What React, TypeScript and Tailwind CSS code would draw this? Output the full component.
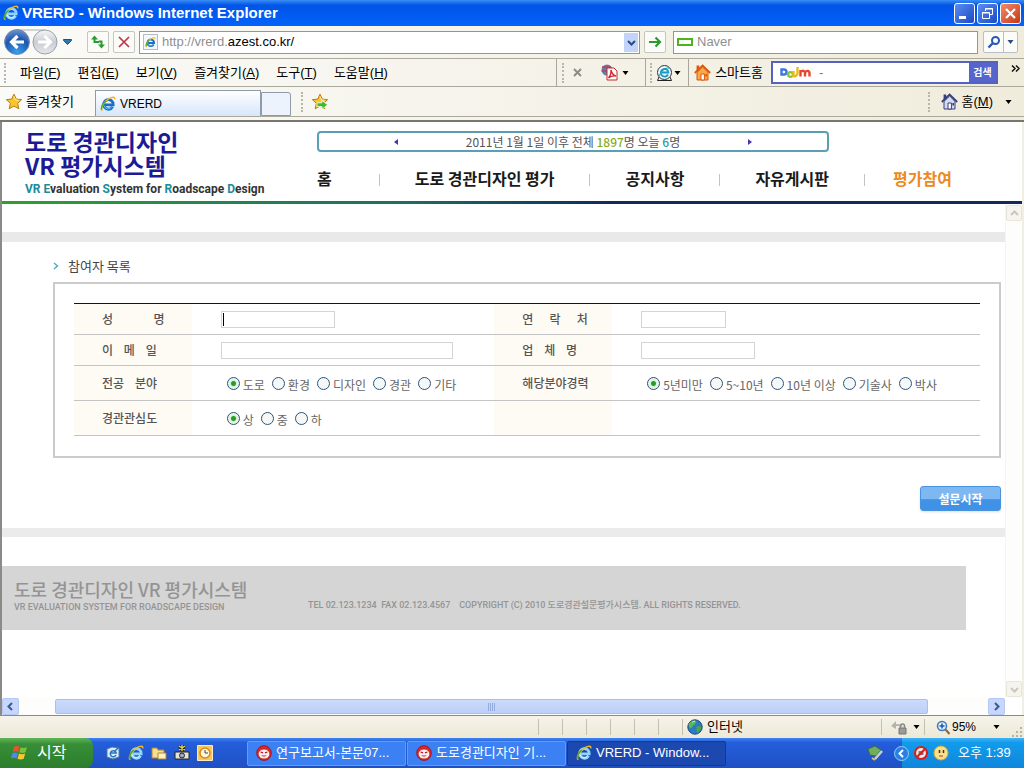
import React from 'react';
import clsx from 'clsx';

function IeIcon({ size = 16, light = false }: { size?: number; light?: boolean }) {
  return (
    <svg width={size} height={size} viewBox="0 0 16 16" fill="none" className="shrink-0">
      <path d="M12.6 10.8A4.8 4.8 0 1 1 13.2 8.8H4.6" stroke={light ? '#8fd4fb' : '#1c6fc4'} strokeWidth="2.8" />
      <path d="M11.8 10.8A4.2 4.2 0 0 1 4 9.4" stroke={light ? '#e4f6ff' : '#5cc0f4'} strokeWidth="1" />
      <path d="M2.4 14.6C-.6 13.6 3.6 5.6 9 2.6 12.4.6 15 .6 14.8 3.4" stroke="#f0b81c" strokeWidth="1.5" />
      <path d="M1.8 13.6C.8 10.8 3 7.6 5.6 5" stroke="#4faa32" strokeWidth="1.6" />
    </svg>
  );
}

function StarIcon({ add = false }: { add?: boolean }) {
  return (
    <svg width="18" height="18" viewBox="0 0 18 18" className="shrink-0">
      <path d="M9 1.2l2.3 4.9 5.3.6-4 3.6 1.2 5.5L9 13l-4.8 2.8 1.2-5.5-4-3.6 5.3-.6z" fill="#fbc52c" stroke="#b97a10" />
      <path d="M9 3.4l1.4 3.5 3.4.4" stroke="#fff2a6" fill="none" />
      {add && <path d="M6 9.8h5V7.4l5.6 4.4-5.6 4.4v-2.6H6z" fill="#3dbb2c" stroke="#fff" strokeWidth=".8" />}
    </svg>
  );
}

function HouseIcon({ roof, wall }: { roof: string; wall: string }) {
  return (
    <svg width="17" height="17" viewBox="0 0 17 17" className="shrink-0">
      <path d="M3 8.4L8.6 3 14 8.4V16H3z" fill={wall} stroke={roof} />
      <path d="M2.6 1.4h2.6V6L2.6 8z" fill={roof} />
      <path d="M.8 9L8.6 1.6 16.2 9" fill="none" stroke={roof} strokeWidth="1.8" />
      <path d="M7 10h3.4v6H7z" fill="#fff" stroke={roof} />
      <path d="M11.4 10h1.6v2.4h-1.6z" fill={roof} />
    </svg>
  );
}

function GlobeIcon() {
  return (
    <svg width="16" height="16" viewBox="0 0 16 16" className="shrink-0">
      <circle cx="8" cy="8" r="7.2" fill="#2b79c4" stroke="#1c4a78" />
      <path d="M2 4.6C4.4 1 8.6 1 9.4 2.4 8 4 8.6 5.6 6.6 6.2 4.8 6.8 5.4 9 3.4 9.4 2 8 1.4 6.4 2 4.6z" fill="#5cb84c" />
      <path d="M9 8c2-1.6 4-.8 5.4 0-.2 3-2 5-4 5.8C9 12.4 10 10.4 9 8z" fill="#49a447" />
      <path d="M5 3.4c1-1 2.4-1.2 3-1" stroke="#cfeaff" fill="none" />
    </svg>
  );
}

function HwpIcon() {
  return (
    <svg width="16" height="16" viewBox="0 0 16 16" className="shrink-0">
      <circle cx="8" cy="8" r="7.4" fill="#d8262a" stroke="#8d1b26" strokeWidth=".8" />
      <ellipse cx="8" cy="9" rx="5.4" ry="4.6" fill="#fbeeee" />
      <path d="M4.6 7l2.4.8M11.4 7L9 7.8" stroke="#b5161c" strokeWidth="1.3" fill="none" />
      <path d="M5.5 10c1.6.8 3.4.8 5 0-.4 2-4.6 2-5 0z" fill="#d8262a" />
    </svg>
  );
}

function Caret({ className = 'text-black' }: { className?: string }) {
  return (
    <svg width="7" height="4" viewBox="0 0 7 4" className={clsx('shrink-0', className)}>
      <path d="M.5 0h6L3.5 4z" fill="currentColor" />
    </svg>
  );
}

function Chevron({ d }: { d: string }) {
  return (
    <svg width="9" height="9" viewBox="0 0 9 9" fill="none">
      <path d={d} stroke="currentColor" strokeWidth="2" />
    </svg>
  );
}

function Grip() {
  return <span className="block h-5 w-0 shrink-0 border-l-2 border-dotted border-[#b9b7a8]" />;
}

function Divider() {
  return <span className="block h-7 w-px shrink-0 bg-[#a9a79a]" />;
}

function TitleBar() {
  const winButton = 'flex size-[21px] items-center justify-center rounded-[3px] border border-white';
  return (
    <div className="flex h-[26px] items-center bg-linear-to-b from-[#3a8cf5] via-[#0054e6] via-20% to-[#0462fb] pr-[3px] pl-[3px]">
      <IeIcon light />
      <h1 className="ml-[3px] flex-1 text-[15px] leading-5 font-bold text-white [font-family:'Liberation_Sans',sans-serif]">
        VRERD - Windows Internet Explorer
      </h1>
      <div className="flex gap-[2px]">
        <button aria-label="최소화" className={clsx(winButton, 'bg-linear-to-br from-[#5c8df2] to-[#1a49c4]')}>
          <svg width="13" height="13" viewBox="0 0 13 13"><path d="M1 9h7v3H1z" fill="#fff" /></svg>
        </button>
        <button aria-label="이전 크기로" className={clsx(winButton, 'bg-linear-to-br from-[#5c8df2] to-[#1a49c4]')}>
          <svg width="13" height="13" viewBox="0 0 13 13" fill="none" stroke="#fff">
            <path d="M4.5 4V1.5h7v6H9M4 2h8" />
            <path d="M1.5 5.5h7v6h-7zM1 6h8" />
          </svg>
        </button>
        <button aria-label="닫기" className={clsx(winButton, 'bg-linear-to-br from-[#f08a68] to-[#c8330c]')}>
          <svg width="13" height="13" viewBox="0 0 13 13"><path d="M2 2l9 9M11 2l-9 9" stroke="#fff" strokeWidth="2.2" /></svg>
        </button>
      </div>
    </div>
  );
}

function AddressBar() {
  const toolButton = 'flex size-[22px] shrink-0 items-center justify-center rounded-[2px] border border-[#c5c6bd] bg-[#fbfbf8]';
  return (
    <div className="flex h-8 items-center bg-linear-to-r from-[#fafaf8] to-[#f0ecdc] pr-[6px] pl-1">
      <svg width="56" height="28" viewBox="0 0 56 28" className="shrink-0">
        <defs>
          <radialGradient id="back" cx=".5" cy=".9" r=".9">
            <stop offset="0" stopColor="#39a0f0" />
            <stop offset=".6" stopColor="#1d55ae" />
            <stop offset="1" stopColor="#6f94cc" />
          </radialGradient>
          <linearGradient id="fwd" x2="0" y2="1">
            <stop offset="0" stopColor="#f5f6f7" />
            <stop offset=".5" stopColor="#c9cdd2" />
            <stop offset="1" stopColor="#e6e8ea" />
          </linearGradient>
        </defs>
        <path d="M13 2h28" stroke="#a9b0b8" />
        <circle cx="41" cy="14" r="12" fill="url(#fwd)" stroke="#9aa2ab" />
        <circle cx="13" cy="14" r="12.4" fill="url(#back)" stroke="#6f88ae" />
        <path d="M20 14H8m5.5-6l-6 6 6 6" fill="none" stroke="#fff" strokeWidth="3.2" />
        <path d="M34 14h12m-5.5-6l6 6-6 6" fill="none" stroke="#fff" strokeWidth="3" />
      </svg>
      <svg width="9" height="6" viewBox="0 0 9 6" className="mx-[3px] shrink-0">
        <path d="M.5.5h8v1l-4 4-4-4z" fill="#2f78b8" stroke="#1f4f86" />
      </svg>
      <button aria-label="새로 고침" className={clsx(toolButton, 'ml-3')}>
        <svg width="16" height="16" viewBox="0 0 16 16" fill="#2e9a34">
          <path d="M4.5 1.5L8 5.500H5.500V7H9v2H3.500V5.500H1z" />
          <path d="M11.5 14.500L8 10.500h2.500V8.500H8.800v-2h3.700v4H15z" />
        </svg>
      </button>
      <button aria-label="중지" className={clsx(toolButton, 'ml-1')}>
        <svg width="14" height="14" viewBox="0 0 14 14"><path d="M2 2l10 10M12 2L2 12" stroke="#c0344a" strokeWidth="1.7" /></svg>
      </button>
      <div className="ml-1 flex h-[23px] flex-1 items-center border border-[#8a97a8] bg-white pr-px pl-[3px] text-[13px] [font-family:'Liberation_Sans',sans-serif]">
        <span className="flex h-4 items-center border border-[#b8bcc2] bg-[#f4f7fa] px-px"><IeIcon size={11} /></span>
        <label htmlFor="url" className="ml-1 text-[#8f8f8f]">http://vrerd.</label>
        <input id="url" defaultValue="azest.co.kr/" className="min-w-0 flex-1 text-black outline-none" />
        <button aria-label="주소 목록" className="flex h-[19px] w-[14px] items-center justify-center bg-[#c3d4fb] text-[#2c4a86]">
          <Chevron d="M1 3l3.5 3.5L8 3" />
        </button>
      </div>
      <button aria-label="이동" className={clsx(toolButton, 'ml-1')}>
        <svg width="16" height="16" viewBox="0 0 16 16"><path d="M2 8h11M8.5 3.5L13 8l-4.5 4.5" fill="none" stroke="#2c9a2c" strokeWidth="2.2" /></svg>
      </button>
      <label className="ml-[7px] flex h-[23px] w-[305px] items-center border border-[#8a97a8] bg-white pl-[3px]">
        <span className="h-2 w-4 border-2 border-[#4cb51a]" />
        <input aria-label="검색" placeholder="Naver" className="ml-1 min-w-0 flex-1 text-[13px] outline-none placeholder:text-[#8f8f8f] [font-family:'Liberation_Sans',sans-serif]" />
      </label>
      <div className="ml-[5px] flex h-[22px] rounded-[2px] border border-[#b9bfc9] bg-[#fbfbf8]">
        <button aria-label="찾기" className="flex w-5 items-center justify-center border-r border-[#b9bfc9]">
          <svg width="14" height="14" viewBox="0 0 14 14" fill="none" stroke="#2c55b8">
            <circle cx="8.5" cy="5.5" r="3.5" strokeWidth="2" />
            <path d="M6 8l-4.5 4.5" strokeWidth="2.4" />
          </svg>
        </button>
        <button aria-label="찾기 옵션" className="flex w-[13px] items-center justify-center"><Caret className="text-[#2c4a86]" /></button>
      </div>
    </div>
  );
}

const menus = [
  ['파일', 'F'],
  ['편집', 'E'],
  ['보기', 'V'],
  ['즐겨찾기', 'A'],
  ['도구', 'T'],
  ['도움말', 'H'],
];

function MenuBar() {
  return (
    <div className="flex h-[29px] items-center border-y border-[#aaa99c] bg-linear-to-r from-[#fafaf8] to-[#f0ecdc] text-[13px] leading-5">
      <span className="ml-1"><Grip /></span>
      <nav className="ml-[14px] flex flex-1 gap-[17px]">
        {menus.map(([name, key]) => (
          <button key={key}>{name}(<u>{key}</u>)</button>
        ))}
      </nav>
      <Divider />
      <span className="ml-[5px]"><Grip /></span>
      <button aria-label="도구 모음 닫기" className="ml-[9px]">
        <svg width="9" height="9" viewBox="0 0 9 9"><path d="M1 1l7 7M8 1L1 8" stroke="#8d8c86" strokeWidth="2" /></svg>
      </button>
      <svg width="18" height="17" viewBox="0 0 18 17" className="mr-1 ml-[18px] shrink-0">
        <circle cx="7" cy="6" r="5.5" fill="#5d7fae" />
        <path d="M2 3h9M1.5 7h10" stroke="#b9425c" strokeWidth="1.5" />
        <path d="M7 4h7l3 3v9H7z" fill="#fff" stroke="#c22b30" />
        <path d="M8.5 14c2-2.5 3-5 2.5-8 1 4 2.5 5.5 5 6-3-.5-5 0-7.5 2z" fill="none" stroke="#d8262a" strokeWidth="1.3" />
      </svg>
      <Caret />
      <span className="ml-4"><Divider /></span>
      <span className="ml-1"><Grip /></span>
      <svg width="18" height="18" viewBox="0 0 18 18" fill="none" className="ml-1 shrink-0">
        <path d="M3 13L1.5 16.5h14L14 13" fill="#e9eef2" stroke="#222" />
        <circle cx="8.5" cy="8.5" r="7" fill="#eaf8fc" stroke="#333" />
        <path d="M12 10.5a3.8 3.8 0 1 1 .4-2H6" stroke="#159ac2" strokeWidth="1.8" />
        <path d="M3.5 12C4 8 9 3.5 13.5 4" stroke="#159ac2" />
      </svg>
      <Caret />
      <span className="ml-[7px]"><Divider /></span>
      <a href="#home" className="ml-[5px] flex items-center gap-1">
        <HouseIcon roof="#d8590c" wall="#f9a84a" />
        스마트홈
      </a>
      <form className="ml-2 flex h-[23px] w-[227px] items-center border-2 border-[#5462c4] bg-white pl-[7px]">
        <svg width="31" height="13" viewBox="0 0 31 13" fill="none" strokeWidth="2.4" className="shrink-0">
          <path d="M1.5 3.5H4a2.5 2.5 0 0 1 0 5H1.5z" stroke="#3f78e0" />
          <circle cx="10.5" cy="8.5" r="2.4" stroke="#8cc431" />
          <path d="M13.5 5v6M17.5 1v6a3 3 0 0 1-4 3" stroke="#f0b81c" />
          <path d="M20.5 10.5V4M20.5 6c2-2 4.5-1.5 4.5 1v3.5M25 6.5c2-2.5 4.5-2 4.5 1v3" stroke="#e4482f" />
        </svg>
        <span className="ml-2 text-[#777]">-</span>
        <input aria-label="다음 검색" className="min-w-0 flex-1 outline-none" />
        <button className="h-full w-[27px] bg-[#5664cc] text-[10px] font-bold text-white">검색</button>
      </form>
      <svg width="9" height="7" viewBox="0 0 9 7" fill="none" className="mt-[6px] mr-1 ml-[13px] shrink-0 self-start">
        <path d="M1 .5l3 3-3 3M5 .5l3 3-3 3" stroke="#111" strokeWidth="1.5" />
      </svg>
    </div>
  );
}

function TabBar() {
  return (
    <div className="flex h-[35px] items-start border-b-2 border-[#77766f] bg-linear-to-r from-[#fafaf8] to-[#f0ecdc] text-[13px] leading-5">
      <div className="flex h-[30px] w-full items-center border-b border-[#aaa99c]">
        <button className="flex w-[95px] items-center gap-[3px] pl-[5px]">
          <StarIcon />
          즐겨찾기
        </button>
        <button className="flex h-[26px] w-[166px] items-center gap-1 self-end border border-b-0 border-[#8f9aab] bg-linear-to-b from-white to-[#d6e6fa] pl-1 text-xs [font-family:'Liberation_Sans',sans-serif]">
          <IeIcon />
          VRERD
        </button>
        <button aria-label="새 탭" className="h-6 w-[30px] self-end rounded-tr-[3px] border border-[#8f9aab] bg-[#edf3fc]" />
        <span className="ml-[10px]"><Grip /></span>
        <button aria-label="즐겨찾기에 추가" className="ml-2"><StarIcon add /></button>
        <span className="ml-auto"><Grip /></span>
        <button className="mr-3 ml-[11px] flex items-center gap-1">
          <HouseIcon roof="#3a3f7a" wall="#d3dcf0" />
          <span>홈(<u>M</u>)</span>
        </button>
        <Caret />
        <span className="w-3" />
      </div>
    </div>
  );
}

const navItems = ['도로 경관디자인 평가', '공지사항', '자유게시판'];

function SiteHeader() {
  return (
    <header>
      <div className="grid h-[79px] grid-cols-[315px_1fr]">
        <div className="pt-[7px] pl-[23px]">
          <p className="text-[23px] leading-6 font-bold text-[#1b1b96]">도로 경관디자인</p>
          <p className="text-[23px] leading-6 font-bold text-[#1b1b96]">VR 평가시스템</p>
          <p className="pt-1 text-xs leading-4 font-bold whitespace-nowrap text-[#333] [font-family:'Roboto',sans-serif]">
            <span className="text-[#1b8c98]">VR E</span>valuation <span className="text-[#1b8c98]">S</span>ystem for{' '}
            <span className="text-[#1b8c98]">R</span>oadscape <span className="text-[#1b8c98]">D</span>esign
          </p>
        </div>
        <div className="pt-[9px]">
          <div className="flex h-[21px] w-[512px] items-center justify-between rounded-[4px] border-2 border-[#5a9fb4] px-[75px] text-[12px] text-[#555]">
            <button aria-label="이전" className="text-[#4337b0]">
              <svg width="4" height="6" viewBox="0 0 4 6"><path d="M4 0v6L0 3z" fill="currentColor" /></svg>
            </button>
            <p className="leading-4">
              2011년 1월 1일 이후 전체 <b className="font-medium text-[#8aac1c]">1897</b>명 오늘 <b className="font-medium text-[#2d9aa4]">6</b>명
            </p>
            <button aria-label="다음" className="text-[#4337b0]">
              <svg width="4" height="6" viewBox="0 0 4 6"><path d="M0 0v6l4-3z" fill="currentColor" /></svg>
            </button>
          </div>
          <nav className="mt-[14px] flex items-center text-base leading-6 font-bold whitespace-nowrap text-[#1a1a1a]">
            <a href="#main" className="mr-3">홈</a>
            {navItems.map((item) => (
              <React.Fragment key={item}>
                <span className="mt-1 ml-[35px] h-3 w-px bg-[#c4c4c4]" />
                <a href={`#${item}`} className="ml-[35px]">{item}</a>
              </React.Fragment>
            ))}
            <span className="mt-1 ml-[35px] h-3 w-px bg-[#c4c4c4]" />
            <a href="#join" className="ml-7 text-[#ec8a22]">평가참여</a>
          </nav>
        </div>
      </div>
      <div className="h-[3px] bg-linear-to-r from-[#2fa12a] via-[#1c6e60] via-40% to-[#12285e] to-60%" />
    </header>
  );
}

function RadioGroup({ name, options }: { name: string; options: string[] }) {
  return (
    <div role="radiogroup" aria-label={name} className="flex gap-[7px] pl-[6px] whitespace-nowrap text-[#666]">
      {options.map((option, i) => (
        <label key={option} className="flex items-center gap-[3px]">
          <input
            type="radio"
            name={name}
            defaultChecked={i === 0}
            className="size-[13px] appearance-none rounded-full border border-[#2a5478] bg-[#f6f8f8] checked:bg-[radial-gradient(circle,#22a022_0_2px,#d9efd9_3px,#f6f8f8_6px)]"
          />
          <span className="pt-[3px] leading-4">{option}</span>
        </label>
      ))}
    </div>
  );
}

function Th({ htmlFor, children }: { htmlFor?: string; children?: React.ReactNode }) {
  return (
    <th className="bg-[#fefaf4] pl-7 text-left font-medium whitespace-pre">
      {htmlFor ? <label htmlFor={htmlFor}>{children}</label> : children}
    </th>
  );
}

function SurveyForm() {
  const field = 'block h-[17px] border border-[#d4d4d4] bg-white px-1 outline-none';
  return (
    <form className="mr-1 ml-[51px]">
      <h2 className="flex items-center gap-[9px] pt-[14px] text-[13px] leading-5 text-[#444]">
        <svg width="6" height="8" viewBox="0 0 6 8" fill="none"><path d="M1 1l3.5 3L1 7" stroke="#56a9c2" strokeWidth="1.5" /></svg>
        참여자 목록
      </h2>
      <div className="mt-[6px] border-2 border-[#cbcbcb] px-[19px] pt-[19px] pb-5">
        <table className="w-full table-fixed border-collapse text-xs leading-4 text-[#555]">
          <colgroup>
            <col className="w-[13%]" />
            <col className="w-[33.4%]" />
            <col className="w-[13%]" />
            <col />
          </colgroup>
          <tbody>
            <tr className="h-[31px] border-t border-b border-t-[#1a1214] border-b-[#c4c4c4]">
              <Th htmlFor="name">{'성               명'}</Th>
              <td className="pl-[29px]">
                <div className="relative">
                  <input id="name" type="text" className={clsx(field, 'w-[114px]')} />
                  <span className="absolute top-[2px] left-[2px] h-[13px] w-px bg-black" />
                </div>
              </td>
              <Th htmlFor="phone">{'연      락      처'}</Th>
              <td className="pl-[29px]"><input id="phone" type="tel" className={clsx(field, 'w-[85px]')} /></td>
            </tr>
            <tr className="h-[31px] border-b border-[#c4c4c4]">
              <Th htmlFor="email">{'이    메    일'}</Th>
              <td className="pl-[29px]"><input id="email" type="email" className={clsx(field, 'w-[232px]')} /></td>
              <Th htmlFor="company">{'업    체    명'}</Th>
              <td className="pl-[29px]"><input id="company" type="text" className={clsx(field, 'w-[114px]')} /></td>
            </tr>
            <tr className="h-[35px] border-b border-[#c4c4c4]">
              <Th>{'전공    분야'}</Th>
              <td className="pl-[29px]"><RadioGroup name="전공 분야" options={['도로', '환경', '디자인', '경관', '기타']} /></td>
              <Th>해당분야경력</Th>
              <td className="pl-[29px]"><RadioGroup name="해당분야경력" options={['5년미만', '5~10년', '10년 이상', '기술사', '박사']} /></td>
            </tr>
            <tr className="h-[35px] border-b border-[#c4c4c4]">
              <Th>경관관심도</Th>
              <td className="pl-[29px]"><RadioGroup name="경관관심도" options={['상', '중', '하']} /></td>
              <Th />
              <td />
            </tr>
          </tbody>
        </table>
      </div>
      <div className="flex justify-end pt-7">
        <button type="button" className="h-[25px] w-[81px] rounded-[3px] border border-[#4a93dc] bg-linear-to-b from-[#7db8f2] from-50% to-[#3f92e6] to-55% text-xs leading-5 font-bold text-white shadow-sm">
          설문시작
        </button>
      </div>
    </form>
  );
}

function SiteFooter() {
  return (
    <footer className="mt-[29px] mr-[39px] flex h-16 items-center bg-[#d5d5d5] pb-[6px] pl-3 font-medium whitespace-nowrap text-[#949494]">
      <div className="w-[294px]">
        <p className="text-[18px] leading-6">도로 경관디자인 VR 평가시스템</p>
        <p className="text-[9px] leading-3 [font-family:'Roboto',sans-serif]">VR EVALUATION SYSTEM FOR ROADSCAPE DESIGN</p>
      </div>
      <p className="pt-5 text-[9px] leading-3 whitespace-pre [font-family:'Roboto','Noto_Sans_CJK_KR',sans-serif]">
        {'TEL 02.123.1234  FAX 02.123.4567    COPYRIGHT (C) 2010 도로경관설문평가시스템. ALL RIGHTS RESERVED.'}
      </p>
    </footer>
  );
}

function StatusBar() {
  return (
    <div className="flex h-[23px] items-center justify-end border-t border-[#8d8b80] bg-linear-to-b from-[#f6f4ea] to-[#ece9d8] text-[13px] leading-5">
      <div className="flex h-4 gap-[23px]">
        {[0, 1, 2, 3, 4, 5, 6].map((n) => (
          <span key={n} className="w-px bg-[#c3c0ae]" />
        ))}
      </div>
      <div className="ml-1 flex w-[194px] items-center gap-1">
        <GlobeIcon />
        인터넷
      </div>
      <span className="h-4 w-px bg-[#c3c0ae]" />
      <svg width="18" height="16" viewBox="0 0 18 16" className="ml-2 shrink-0">
        <path d="M1 7l5-5v3c4 0 6 1 7 3-2-1-4-1-7-1v3z" fill="#b4b3ac" />
        <path d="M9 9h7v6H9z" fill="#9b9b98" stroke="#777" />
        <path d="M10.5 9V7a2 2 0 0 1 4 0v2" fill="none" stroke="#888" strokeWidth="1.5" />
      </svg>
      <span className="ml-[5px]"><Caret /></span>
      <span className="ml-1 h-4 w-px bg-[#c3c0ae]" />
      <button className="ml-[11px] flex items-center gap-px text-xs [font-family:'Liberation_Sans',sans-serif]">
        <svg width="15" height="15" viewBox="0 0 15 15" fill="none">
          <circle cx="6" cy="6" r="4.5" fill="#e2f0fc" stroke="#3a78b8" strokeWidth="1.5" />
          <path d="M6 3.5v5M3.5 6h5" stroke="#1d58a8" strokeWidth="1.5" />
          <path d="M9.5 9.5L13.5 14" stroke="#96622c" strokeWidth="2" />
        </svg>
        95%
      </button>
      <span className="mr-3 ml-[17px]"><Caret /></span>
      <svg width="11" height="11" viewBox="0 0 11 11" className="mr-px self-end" fill="#b8b4a2">
        <path d="M8 0h2v2H8zM8 4h2v2H8zM8 8h2v2H8zM4 4h2v2H4zM4 8h2v2H4zM0 8h2v2H0z" />
      </svg>
    </div>
  );
}

function TaskBar() {
  const task = 'flex h-[25px] w-[159px] items-center gap-1 rounded-[2px] border pl-2 text-left';
  return (
    <div className="flex h-[30px] items-center bg-linear-to-b from-[#3f82f0] via-[#245edb] via-15% to-[#1f50c4] text-[13px] whitespace-nowrap text-white">
      <button className="flex h-full w-[93px] items-center gap-2 rounded-r-[8px] bg-linear-to-b from-[#5fb658] via-[#388f38] via-20% to-[#2c7d2c] pl-[11px] text-base">
        <svg width="18" height="18" viewBox="0 0 18 18" className="shrink-0">
          <path d="M3 3c2-1.5 4-1.3 5.5-.4L7.2 8C5.5 7 3.6 7 1.6 8z" fill="#e8542c" />
          <path d="M9.6 3.2c2 1 4 1 6.4-.2l-1.5 5.2c-2.2 1-4.3 1-6.2 0z" fill="#7cc13c" />
          <path d="M1.3 9.2c2-1 4-1 5.6 0l-1.4 5.2c-1.8-1-3.6-1-5.5 0z" fill="#4b8be8" />
          <path d="M8 9.5c2 1 4 1 6.2 0l-1.5 5.3c-2 1-4.2 1-6.2 0z" fill="#f7c832" />
        </svg>
        시작
      </button>
      <div className="ml-3 flex w-[142px] items-center gap-[7px]">
        <svg width="16" height="16" viewBox="0 0 16 16">
          <path d="M2 4l5-2 7 1v9l-6 2-6-2z" fill="#dcecf8" stroke="#567a9c" />
          <path d="M11 10a3 3 0 1 1 .2-2H6M10 6l4-4" stroke="#2275c2" strokeWidth="1.5" fill="none" />
        </svg>
        <IeIcon light />
        <svg width="16" height="16" viewBox="0 0 16 16">
          <path d="M1 3h5l1 2h6v8H1z" fill="#f5dd92" stroke="#b4852a" />
          <path d="M7 8h8v6H7z" fill="#fff3c4" stroke="#b4852a" />
        </svg>
        <svg width="16" height="16" viewBox="0 0 16 16">
          <path d="M1 7h14v7H1z" fill="#e4e4dc" stroke="#222" />
          <circle cx="8" cy="10.5" r="2.5" fill="#9ac" stroke="#222" />
          <path d="M5 1l6 4M11 1L5 5M8 0v6" stroke="#222" strokeWidth="2.6" />
          <path d="M5 1l6 4M11 1L5 5M8 0v6" stroke="#f0dc3c" strokeWidth="1.3" />
        </svg>
        <svg width="16" height="16" viewBox="0 0 16 16">
          <path d="M.5.5h15v15H.5z" fill="#f7c65c" stroke="#fbe9c0" />
          <circle cx="8" cy="8" r="5" fill="#fff6e0" stroke="#d88a1c" strokeWidth="1.5" />
          <path d="M8 5v3h3" stroke="#444" fill="none" />
        </svg>
      </div>
      <div className="flex flex-1 gap-px">
        <button className={clsx(task, 'border-[#5e9cf8] bg-[#3c81f3]')}><HwpIcon />연구보고서-본문07...</button>
        <button className={clsx(task, 'border-[#5e9cf8] bg-[#3c81f3]')}><HwpIcon />도로경관디자인 기...</button>
        <button className={clsx(task, 'border-[#123a94] bg-[#1c49b0]')}><IeIcon light />VRERD - Window...</button>
      </div>
      <svg width="17" height="17" viewBox="0 0 17 17" className="mr-[18px] shrink-0">
        <path d="M1 4l7-3 6 4-5 6-6-1z" fill="#6fae5c" stroke="#3d6c48" />
        <path d="M8 14l7-8" stroke="#c9ced2" strokeWidth="2.5" />
        <path d="M5 13l3 2" stroke="#d8c468" strokeWidth="2" />
      </svg>
      <div className="flex h-full w-[122px] items-center bg-linear-to-b from-[#3fb3f7] via-[#129bec] via-15% to-[#0f86dc]">
        <button aria-label="숨겨진 아이콘 표시" className="-ml-2 flex size-[15px] items-center justify-center rounded-full border border-[#8fd0fa] bg-[#2b7fe0]">
          <Chevron d="M6 1L2.5 4.5 6 8" />
        </button>
        <svg width="16" height="16" viewBox="0 0 16 16" className="ml-1">
          <circle cx="8" cy="8" r="6" fill="#f0efe8" stroke="#d42020" strokeWidth="2.2" />
          <path d="M5.5 6h5v4h-5z" fill="#777" />
          <path d="M12 4l-8 8" stroke="#d42020" strokeWidth="2.2" />
        </svg>
        <svg width="16" height="16" viewBox="0 0 16 16" className="ml-1">
          <circle cx="8" cy="8" r="7" fill="#fbe28a" stroke="#d9a92c" />
          <path d="M6.5 5v3M10.5 5v3" stroke="#333" strokeWidth="1.5" />
          <path d="M6 11h4" stroke="#c33" />
        </svg>
        <time className="ml-[9px]">오후 1:39</time>
      </div>
    </div>
  );
}

export default function App() {
  const scrollButton = 'flex items-center justify-center rounded-[2px] border';
  return (
    <div className="flex min-h-screen flex-col bg-white text-black [font-family:'Liberation_Sans','Noto_Sans_CJK_KR',sans-serif]">
      <TitleBar />
      <AddressBar />
      <MenuBar />
      <TabBar />
      <div className="flex flex-1 flex-col border-x-2 border-l-[#8a8a86] border-r-[#f1efe2] bg-white [font-family:'Noto_Sans_CJK_KR',sans-serif]">
        <SiteHeader />
        <div className="flex flex-1">
          <main className="flex-1 pt-7">
            <div className="h-[10px] bg-[#e9e9e9]" />
            <SurveyForm />
            <div className="mt-[17px] h-[9px] bg-[#ebebeb]" />
            <SiteFooter />
          </main>
          <div className="flex w-[17px] flex-col justify-between border-l border-[#f4f4f0] bg-[#fdfdfb] py-px text-[#c9c7ba]">
            <button aria-label="위로" className={clsx(scrollButton, 'h-4 border-[#e8e6da] bg-[#f5f4ee]')}><Chevron d="M1 6l3.5-3.5L8 6" /></button>
            <button aria-label="아래로" className={clsx(scrollButton, 'h-4 border-[#e8e6da] bg-[#f5f4ee]')}><Chevron d="M1 3l3.5 3.5L8 3" /></button>
          </div>
        </div>
        <div className="flex h-[17px] pr-[17px] text-[#3b5a94]">
          <button aria-label="왼쪽으로" className={clsx(scrollButton, 'w-[17px] border-[#b4c8f6] bg-[#c6d6fc]')}><Chevron d="M6 1L2.5 4.5 6 8" /></button>
          <div className="flex flex-1 bg-[#fdfdfb] pr-[60px] pl-9">
            <div className="my-px flex flex-1 items-center justify-center gap-px rounded-[2px] border border-[#a9c0ee] bg-linear-to-b from-[#cbdafd] to-[#bdd0f8]">
              {[0, 1, 2, 3].map((n) => (
                <span key={n} className="h-2 w-px bg-[#93abdd]" />
              ))}
            </div>
          </div>
          <button aria-label="오른쪽으로" className={clsx(scrollButton, 'w-[17px] border-[#b4c8f6] bg-[#c6d6fc]')}><Chevron d="M3 1l3.5 3.5L3 8" /></button>
        </div>
      </div>
      <StatusBar />
      <TaskBar />
    </div>
  );
}
